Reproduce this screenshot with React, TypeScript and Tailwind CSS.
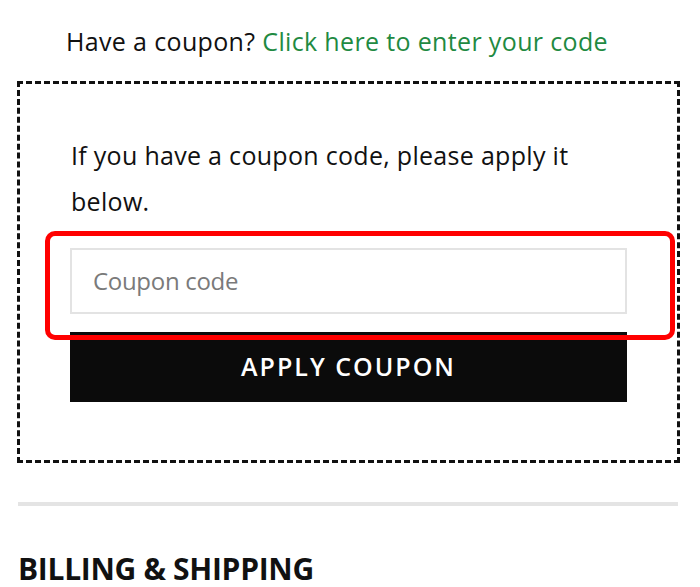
import React from "react";

export default function App() {
  return (
    <div
      className="w-[700px] h-[587px] overflow-hidden bg-white text-[#111111]"
      style={{ fontFamily: '"Open Sans", "Noto Sans", sans-serif' }}
    >
      <div className="pl-[17px] pr-[20px] pt-[18px]">
        <p className="pl-[49px] text-[25px] leading-[46px] tracking-[0.35px]">
          Have a coupon?{" "}
          <a className="text-[#1f8a42]">Click here to enter your code</a>
        </p>
        <div className="relative mt-[17px] border-[3px] border-dashed border-[#111111] px-[50px] pt-[48px] pb-[58px]">
          <p className="pl-[1px] text-[25px] leading-[46px] tracking-[0.3px]">
            If you have a coupon code, please apply it below.
          </p>
          <div className="mt-[24px] h-[66px] border-2 border-[#e3e3e3] flex items-center pl-[21px] text-[24px] text-[#7a7a7a] tracking-[-0.3px]">
            Coupon code
          </div>
          <div className="mt-[18px] h-[70px] bg-[#0b0b0b] flex items-center justify-center text-white text-[25px] font-semibold tracking-[2px]">
            APPLY COUPON
          </div>
          <div className="absolute left-[25px] top-[147px] w-[630px] h-[109px] border-[5px] border-[#ff0000] rounded-[10px]" />
        </div>
        <div className="mt-[39px] ml-[1px] mr-[2px] h-[4px] bg-[#e4e4e4]" />
        <h2 className="mt-[48px] pl-[1px] text-[30px] font-bold leading-[30px] tracking-[-0.3px]">
          BILLING &amp; SHIPPING
        </h2>
      </div>
    </div>
  );
}
